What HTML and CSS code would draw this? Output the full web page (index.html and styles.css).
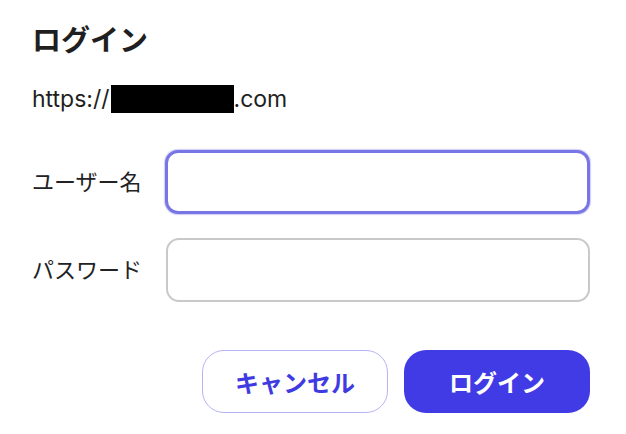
FILE: index.html
```html
<!DOCTYPE html>
<html lang="ja">
<head>
<meta charset="utf-8">
<link rel="stylesheet" href="styles.css">
</head>
<body>
<div class="dialog">
  <h1 class="title">ログイン</h1>
  <div class="url">https://<span class="redact"></span>.com</div>
  <form class="form">
    <div class="row">
      <label class="label" for="user">ユーザー名</label>
      <input class="field focused" id="user" type="text">
    </div>
    <div class="row">
      <label class="label" for="pass">パスワード</label>
      <input class="field" id="pass" type="password">
    </div>
    <div class="actions">
      <button type="button" class="btn btn-cancel">キャンセル</button>
      <button type="button" class="btn btn-login">ログイン</button>
    </div>
  </form>
</div>
</body>
</html>
```
FILE: styles.css
```css
html, body {
  margin: 0;
  padding: 0;
  background: #ffffff;
}
body {
  font-family: Inter, "Noto Sans CJK JP", sans-serif;
  color: #1f1f22;
}
.dialog {
  width: 626px;
  box-sizing: border-box;
  padding: 18px 36px 0 32px;
}
.title {
  margin: 0;
  font-size: 29px;
  line-height: 40px;
  font-weight: 700;
  font-family: "Noto Sans CJK JP", sans-serif;
}
.url {
  margin-top: 27px;
  font-size: 23px;
  line-height: 28px;
  height: 28px;
  display: flex;
  align-items: center;
}
.redact {
  display: inline-block;
  width: 123px;
  height: 28px;
  background: #000;
  margin-left: 1px;
}
.form {
  margin: 37px 0 0 0;
  display: flex;
  flex-direction: column;
  gap: 24px;
}
.row {
  display: flex;
  align-items: center;
}
.label {
  width: 134px;
  flex: none;
  font-size: 22px;
  font-family: "Noto Sans CJK JP", sans-serif;
  color: #222224;
  padding-bottom: 5px;
}
.field {
  flex: none;
  width: 424px;
  height: 64px;
  box-sizing: border-box;
  border: 2px solid #c9c9cb;
  border-radius: 13px;
  background: #fff;
  margin: 0;
  padding: 0 14px;
  font-size: 20px;
  outline: none;
}
.focused {
  border: 3px solid #7875e4;
  box-shadow: 0 0 1px 1px rgba(120, 117, 228, 0.35);
  margin-left: -1px;
  width: 425px;
}
.actions {
  margin-top: 24px;
  display: flex;
  justify-content: flex-end;
  gap: 16px;
}
.btn {
  width: 186px;
  height: 63px;
  box-sizing: border-box;
  border-radius: 22px;
  font-size: 24px;
  font-weight: 700;
  font-family: "Noto Sans CJK JP", sans-serif;
  cursor: pointer;
  padding: 0;
}
.btn-cancel {
  background: #fff;
  border: 1px solid #b6b4f6;
  color: #3f3be0;
}
.btn-login {
  background: #413be6;
  border: none;
  color: #fff;
}
```
